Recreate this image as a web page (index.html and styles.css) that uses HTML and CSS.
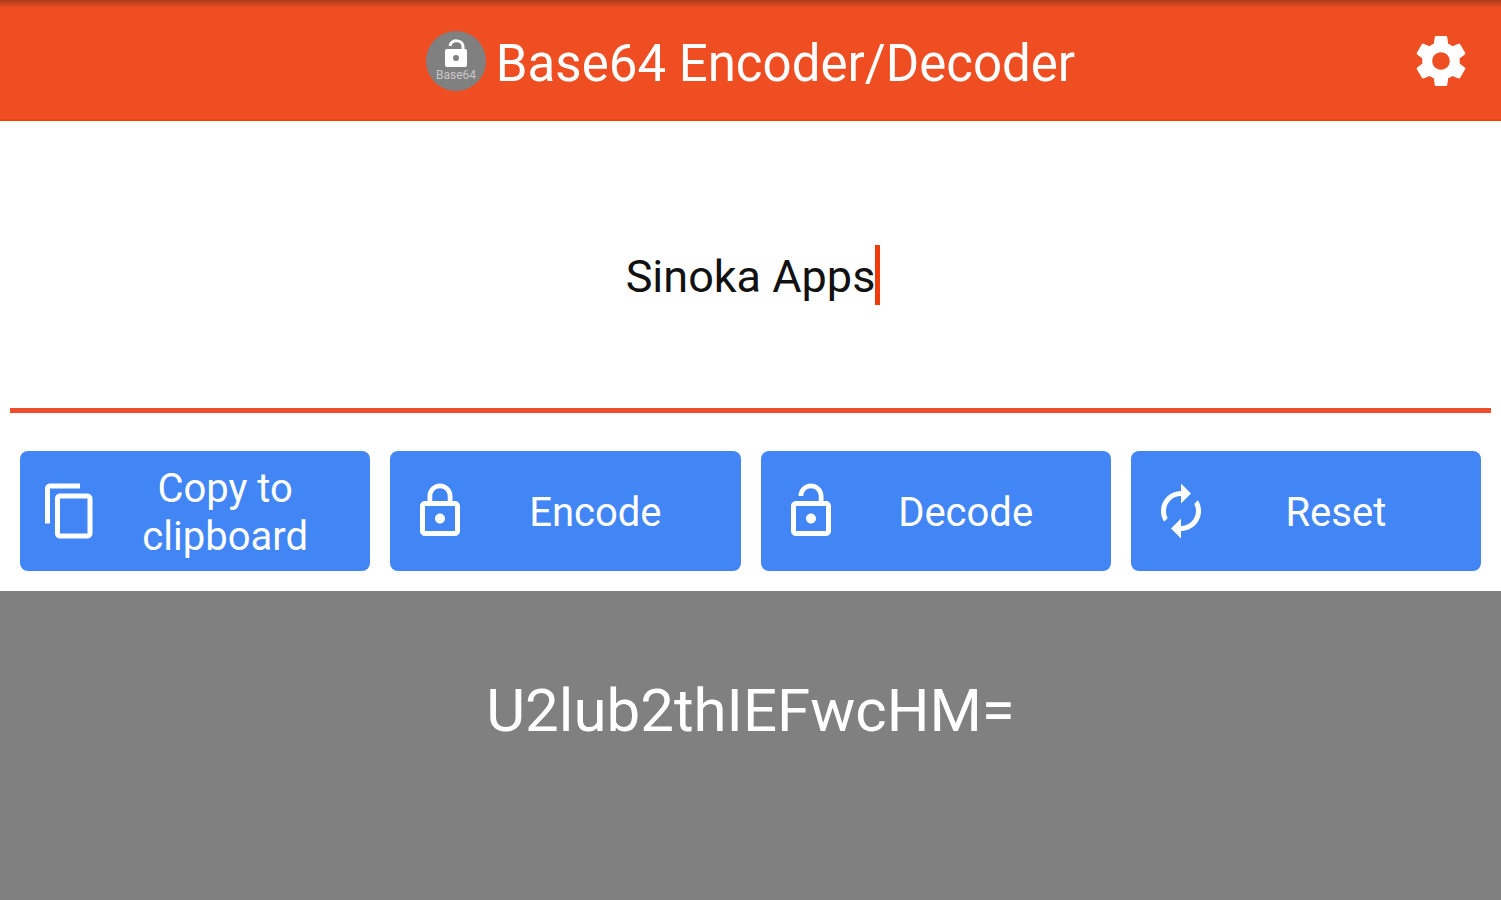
FILE: index.html
```html
<!DOCTYPE html>
<html lang="en">
<head>
  <meta charset="UTF-8">
  <meta name="viewport" content="width=device-width, initial-scale=1.0">
  <title>Base64 Encoder/Decoder</title>
  <link rel="stylesheet" href="styles.css">
</head>
<body>

<header class="topbar">
  <div class="brand">
    <svg class="logo" viewBox="0 0 60 60" aria-hidden="true">
      <circle cx="30" cy="30" r="30" fill="#808080"/>
      <path d="M24 15c1-7 13-7 13 1v3" fill="none" stroke="#fff" stroke-width="3"/>
      <rect x="19" y="18" width="22" height="18" rx="2" fill="#fff"/>
      <circle cx="30" cy="27" r="3" fill="#808080"/>
      <text class="logo-text" x="30" y="48" text-anchor="middle">Base64</text>
    </svg>
    <h1>Base64 Encoder/Decoder</h1>
  </div>
  <button class="settings" aria-label="Settings">
    <svg class="icon" viewBox="0 0 24 24"><path d="M19.43 12.98c.04-.32.07-.64.07-.98s-.03-.66-.07-.98l2.11-1.65c.19-.15.24-.42.12-.64l-2-3.46c-.12-.22-.39-.3-.61-.22l-2.49 1c-.52-.4-1.08-.73-1.69-.98l-.38-2.65C14.46 2.18 14.25 2 14 2h-4c-.25 0-.46.18-.49.42l-.38 2.65c-.61.25-1.17.59-1.69.98l-2.49-1c-.23-.09-.49 0-.61.22l-2 3.46c-.13.22-.07.49.12.64l2.11 1.65c-.04.32-.07.65-.07.98s.03.66.07.98l-2.11 1.65c-.19.15-.24.42-.12.64l2 3.46c.12.22.39.3.61.22l2.49-1c.52.4 1.08.73 1.69.98l.38 2.65c.03.24.24.42.49.42h4c.25 0 .46-.18.49-.42l.38-2.65c.61-.25 1.17-.59 1.69-.98l2.49 1c.23.09.49 0 .61-.22l2-3.46c.12-.22.07-.49-.12-.64l-2.11-1.65zM12 15.5c-1.93 0-3.5-1.57-3.5-3.5s1.57-3.5 3.5-3.5 3.5 1.57 3.5 3.5-1.57 3.5-3.5 3.5z"/></svg>
  </button>
</header>

<main class="content">
  <div class="field">
    <input type="text" id="texto" aria-label="Text" value="Sinoka Apps" size="11">
    <span class="caret"></span>
  </div>

  <div class="actions">
    <button onclick="copyResult()">
      <svg class="icon" viewBox="0 0 24 24"><path d="M16 1H4c-1.1 0-2 .9-2 2v14h2V3h12V1zm3 4H8c-1.1 0-2 .9-2 2v14c0 1.1.9 2 2 2h11c1.1 0 2-.9 2-2V7c0-1.1-.9-2-2-2zm0 16H8V7h11v14z"/></svg>
      <span>Copy to clipboard</span>
    </button>
    <button onclick="encode()">
      <svg class="icon" viewBox="0 0 24 24"><path d="M12 17c1.1 0 2-.9 2-2s-.9-2-2-2-2 .9-2 2 .9 2 2 2zm6-9h-1V6c0-2.76-2.24-5-5-5S7 3.24 7 6v2H6c-1.1 0-2 .9-2 2v10c0 1.1.9 2 2 2h12c1.1 0 2-.9 2-2V10c0-1.1-.9-2-2-2zM8.9 6c0-1.71 1.39-3.1 3.1-3.1s3.1 1.39 3.1 3.1v2H8.9V6zM18 20H6V10h12v10z"/></svg>
      <span>Encode</span>
    </button>
    <button onclick="decode()">
      <svg class="icon" viewBox="0 0 24 24"><path d="M12 17c1.1 0 2-.9 2-2s-.9-2-2-2-2 .9-2 2 .9 2 2 2zm6-9h-1V6c0-2.76-2.24-5-5-5S7 3.24 7 6h1.9c0-1.71 1.39-3.1 3.1-3.1s3.1 1.39 3.1 3.1v2H6c-1.1 0-2 .9-2 2v10c0 1.1.9 2 2 2h12c1.1 0 2-.9 2-2V10c0-1.1-.9-2-2-2zm0 12H6V10h12v10z"/></svg>
      <span>Decode</span>
    </button>
    <button onclick="resetAll()">
      <svg class="icon" viewBox="0 0 24 24"><path d="M12 6v3l4-4-4-4v3c-4.42 0-8 3.58-8 8 0 1.57.46 3.03 1.24 4.26L6.7 14.8c-.45-.83-.7-1.79-.7-2.8 0-3.31 2.69-6 6-6zm6.76 1.74L17.3 9.2c.44.84.7 1.79.7 2.8 0 3.31-2.69 6-6 6v-3l-4 4 4 4v-3c4.42 0 8-3.58 8-8 0-1.57-.46-3.03-1.24-4.26z"/></svg>
      <span>Reset</span>
    </button>
  </div>
</main>

<output class="result" id="result" for="texto">U2lub2thIEFwcHM=</output>

<script>
  const input = document.getElementById('texto');
  const result = document.getElementById('result');

  function encode() {
    result.textContent = btoa(input.value);
  }

  function decode() {
    try {
      result.textContent = atob(input.value);
    } catch (e) {
      result.textContent = '';
    }
  }

  function copyResult() {
    navigator.clipboard.writeText(result.textContent);
  }

  function resetAll() {
    input.value = '';
    result.textContent = '';
  }
</script>
</body>
</html>
```
FILE: styles.css
```css
* { box-sizing: border-box; }
body { margin: 0; min-height: 100vh; display: flex; flex-direction: column; background-color: #ffffff; font-family: Roboto, Arial, sans-serif; }
button { border: none; color: white; font-family: inherit; cursor: pointer; }
.icon { width: 60px; height: 60px; flex-shrink: 0; display: block; fill: currentColor; }

.topbar { display: grid; grid-template-columns: 1fr auto 1fr; align-items: center; min-height: 121px; padding: 2px 30px 0; color: white; background: linear-gradient(#b03c1e, #ee4e22 8px); border-bottom: 2px solid #f24208; }
.brand { grid-column: 2; display: flex; align-items: center; gap: 10px; }
.logo { width: 60px; height: 60px; }
.logo-text { font-size: 12px; fill: #c8c8c8; }
h1 { margin: 0; padding-top: 6px; font-size: 51px; line-height: 60px; font-weight: normal; }
.settings { justify-self: end; padding: 0; background: none; }

.content { flex: 1; display: flex; flex-direction: column; }
.field { flex: 1; display: flex; align-items: center; justify-content: center; margin: 0 10px; padding: 20px 0 0 5px; border-bottom: 5px solid #ee4e2c; }
.field input { field-sizing: content; min-width: 0; padding: 4px 0 0; border: none; outline: none; font-family: inherit; font-size: 45px; line-height: 60px; color: #111; caret-color: transparent; }
.caret { width: 5px; height: 60px; background-color: #f03c0c; }

.actions { display: grid; grid-template-columns: repeat(4, 1fr); gap: 20px; padding: 38px 20px 20px; }
.actions button { display: flex; align-items: center; min-height: 120px; padding: 0 20px; border-radius: 8px; background-color: #4285f4; font-size: 40px; line-height: 48px; }
.actions button:hover { background-color: #3a78e0; }
.actions span { flex: 1; padding-top: 4px; text-align: center; }

.result { min-height: 309px; padding: 85px 20px; background-color: #808080; color: white; font-size: 60px; line-height: 70px; text-align: center; overflow-wrap: anywhere; }
```
